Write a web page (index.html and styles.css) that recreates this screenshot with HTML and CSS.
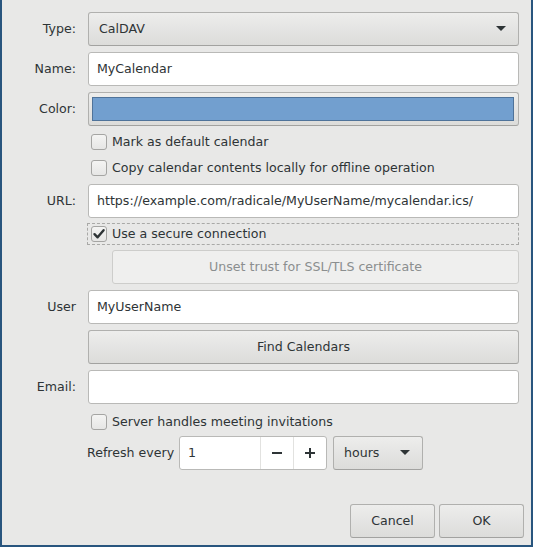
FILE: index.html
```html
<!DOCTYPE html>
<html>
<head>
<meta charset="utf-8">
<link rel="stylesheet" href="styles.css">
</head>
<body>
<div class="window">
  <div class="form">
    <div class="lbl">Type:</div>
    <div class="combo combo-wide">
      <span>CalDAV</span>
      <svg class="arrow" width="10" height="5" viewBox="0 0 10 5"><path d="M0 0H10L5 5Z"/></svg>
    </div>

    <div class="lbl">Name:</div>
    <div class="entry">MyCalendar</div>

    <div class="lbl">Color:</div>
    <div class="colorbtn"><div class="swatch"></div></div>

    <div class="field check-row first-check">
      <span class="box"></span><span class="ctext">Mark as default calendar</span>
    </div>
    <div class="field check-row">
      <span class="box"></span><span class="ctext">Copy calendar contents locally for offline operation</span>
    </div>

    <div class="lbl">URL:</div>
    <div class="entry">https://example.com/radicale/MyUserName/mycalendar.ics/</div>

    <div class="field check-row focused">
      <span class="box checked">
        <svg width="14" height="14" viewBox="0 0 14 14"><path d="M2.5 7.2L5.6 10.3L11.6 3.2" fill="none" stroke="#2e3436" stroke-width="2.4" stroke-linecap="round" stroke-linejoin="round"/></svg>
      </span><span class="ctext">Use a secure connection</span>
    </div>

    <div class="field">
      <div class="btn disabled indent">Unset trust for SSL/TLS certificate</div>
    </div>

    <div class="lbl">User</div>
    <div class="entry">MyUserName</div>

    <div class="field">
      <div class="btn">Find Calendars</div>
    </div>

    <div class="lbl">Email:</div>
    <div class="entry"></div>

    <div class="field check-row server">
      <span class="box"></span><span class="ctext">Server handles meeting invitations</span>
    </div>

    <div class="field refresh">
      <span class="refresh-label">Refresh every</span>
      <div class="spin">
        <div class="spin-value">1</div>
        <div class="spin-btn">
          <svg width="10" height="10" viewBox="0 0 10 10"><rect x="0" y="4" width="10" height="2"/></svg>
        </div>
        <div class="spin-btn">
          <svg width="10" height="10" viewBox="0 0 10 10"><rect x="0" y="4" width="10" height="2"/><rect x="4" y="0" width="2" height="10"/></svg>
        </div>
      </div>
      <div class="combo hours">
        <span>hours</span>
        <svg class="arrow" width="10" height="5" viewBox="0 0 10 5"><path d="M0 0H10L5 5Z"/></svg>
      </div>
    </div>
  </div>

  <div class="actions">
    <div class="btn action">Cancel</div>
    <div class="btn action">OK</div>
  </div>
</div>
</body>
</html>
```

FILE: styles.css
```css
* { box-sizing: border-box; }

html, body {
  margin: 0;
  padding: 0;
  background: #e8e8e7;
}

body {
  font-family: "DejaVu Sans", sans-serif;
  font-size: 12.6px;
  color: #2e3436;
}

.window {
  width: 533px;
  height: 547px;
  border-left: 2px solid #28557e;
  border-right: 2px solid #28557e;
  border-bottom: 2px solid #28557e;
  background: #e8e8e7;
  display: flex;
  flex-direction: column;
}

.form {
  display: grid;
  grid-template-columns: 74px 1fr;
  column-gap: 12px;
  row-gap: 6px;
  padding: 12px 12px 0 0;
}

.lbl {
  text-align: right;
  align-self: center;
  color: #2e3436;
  padding-bottom: 1px;
}

.field {
  grid-column: 2;
}

.entry {
  height: 34px;
  background: #ffffff;
  border: 1px solid #b9b9b7;
  border-radius: 3px;
  padding: 0 8px 1px;
  display: flex;
  align-items: center;
  white-space: nowrap;
}

.combo {
  height: 34px;
  border: 1px solid #b0b0ae;
  border-bottom-color: #a2a2a0;
  border-radius: 3px;
  background: linear-gradient(#ededec, #dcdcda);
  display: flex;
  align-items: center;
  justify-content: space-between;
  padding: 0 12px 1px 10px;
}

.arrow { fill: #2e3436; }

.colorbtn {
  height: 34px;
  border: 1px solid #b0b0ae;
  border-bottom-color: #a2a2a0;
  border-radius: 3px;
  background: linear-gradient(#ededec, #dcdcda);
  padding: 4px 4px 4px 3px;
}

.swatch {
  height: 24px;
  background: #729fcf;
  border: 1px solid #4f739a;
}

.check-row {
  height: 20px;
  display: flex;
  align-items: center;
  gap: 5px;
  padding-left: 3px;
  white-space: nowrap;
}

.ctext { margin-top: -1px; }

.box {
  width: 16px;
  height: 16px;
  flex: 0 0 16px;
  border: 1px solid #a5a5a3;
  border-radius: 3px;
  background: linear-gradient(#f4f4f3, #e6e6e5);
  display: flex;
  align-items: center;
  justify-content: center;
}

.box svg { display: block; }

.focused {
  height: 22px;
  margin: -1px 0 -1px -1px;
  border: 1px dashed #a9a9a7;
}

.btn {
  height: 34px;
  border: 1px solid #b0b0ae;
  border-bottom-color: #a2a2a0;
  border-radius: 3px;
  background: linear-gradient(#ededec, #dcdcda);
  display: flex;
  align-items: center;
  justify-content: center;
  white-space: nowrap;
  padding-bottom: 1px;
}

.btn.disabled {
  background: #efefee;
  border-color: #cdcdcb;
  color: #8b8e8f;
}

.indent { margin-left: 24px; }

.server { margin-top: 2px; margin-bottom: -2px; }

.refresh {
  height: 34px;
  display: flex;
  align-items: center;
}

.refresh-label {
  width: 92px;
  flex: 0 0 92px;
  margin-left: -1px;
  padding-bottom: 1px;
}

.spin {
  width: 148px;
  height: 34px;
  display: flex;
  background: #ffffff;
  border: 1px solid #b9b9b7;
  border-radius: 3px;
}

.spin-value {
  width: 81px;
  padding: 0 0 1px 8px;
  display: flex;
  align-items: center;
  border-right: 1px solid #e2e2e0;
}

.spin-btn {
  width: 32px;
  display: flex;
  align-items: center;
  justify-content: center;
  fill: #2e3436;
}

.spin-btn + .spin-btn {
  border-left: 1px solid #e2e2e0;
}

.hours {
  width: 90px;
  margin-left: 6px;
  padding: 0 12px 1px 10px;
}

.actions {
  margin-top: auto;
  display: flex;
  justify-content: flex-end;
  gap: 4px;
  padding: 0 7px 7px 0;
}

.action {
  width: 85px;
}
```
